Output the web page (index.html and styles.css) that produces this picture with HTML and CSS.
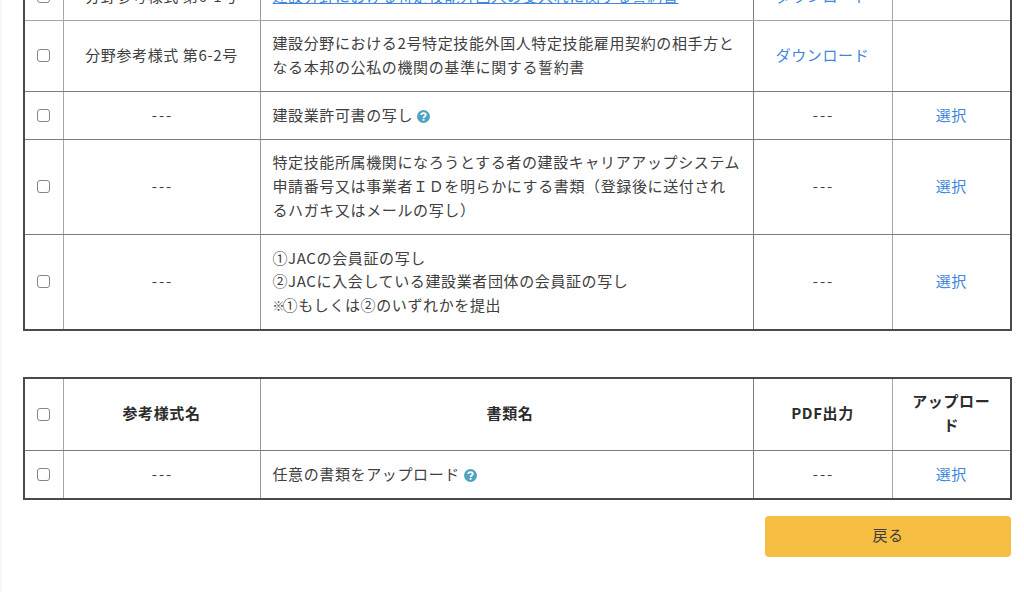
FILE: index.html
```html
<!DOCTYPE html>
<html lang="ja">
<head>
<meta charset="utf-8">
<title>書類一覧</title>
<link rel="stylesheet" href="styles.css">
</head>
<body>
<main class="page">
<table class="docs first">
<colgroup><col class="c1"><col class="c2"><col class="c3"><col class="c4"><col class="c5"></colgroup>
<tbody>
<tr>
<td class="chk"><input type="checkbox"></td>
<td class="ctr">分野参考様式 第6-1号</td>
<td><a href="#" class="ul">建設分野における特定技能外国人の受入れに関する誓約書</a></td>
<td class="ctr"><a href="#">ダウンロード</a></td>
<td class="ctr"></td>
</tr>
<tr>
<td class="chk"><input type="checkbox"></td>
<td class="ctr">分野参考様式 第6-2号</td>
<td>建設分野における2号特定技能外国人特定技能雇用契約の相手方と<br>なる本邦の公私の機関の基準に関する誓約書</td>
<td class="ctr"><a href="#">ダウンロード</a></td>
<td class="ctr"></td>
</tr>
<tr>
<td class="chk"><input type="checkbox"></td>
<td class="ctr dash">---</td>
<td>建設業許可書の写し <svg class="help" viewBox="0 0 14 14"><circle cx="7" cy="7" r="7" fill="#4fa3c0"/><path d="M4.6 5.4c0-1.3 1.1-2.1 2.4-2.1s2.4.8 2.4 2c0 1.7-2.3 1.6-2.3 3.2" fill="none" stroke="#fff" stroke-width="1.9"/><rect x="6.1" y="9.6" width="2" height="2" fill="#fff"/></svg></td>
<td class="ctr dash">---</td>
<td class="ctr"><a href="#">選択</a></td>
</tr>
<tr>
<td class="chk"><input type="checkbox"></td>
<td class="ctr dash">---</td>
<td>特定技能所属機関になろうとする者の建設キャリアアップシステム<br>申請番号又は事業者ＩＤを明らかにする書類（登録後に送付され<br>るハガキ又はメールの写し）</td>
<td class="ctr dash">---</td>
<td class="ctr"><a href="#">選択</a></td>
</tr>
<tr>
<td class="chk"><input type="checkbox"></td>
<td class="ctr dash">---</td>
<td>①JACの会員証の写し<br>②JACに入会している建設業者団体の会員証の写し<br><span class="mark">※</span>①もしくは②のいずれかを提出</td>
<td class="ctr dash">---</td>
<td class="ctr"><a href="#">選択</a></td>
</tr>
</tbody>
</table>
<table class="docs second">
<colgroup><col class="c1"><col class="c2"><col class="c3"><col class="c4"><col class="c5"></colgroup>
<thead>
<tr>
<th class="chk"><input type="checkbox"></th>
<th>参考様式名</th>
<th>書類名</th>
<th>PDF出力</th>
<th>アップロード</th>
</tr>
</thead>
<tbody>
<tr>
<td class="chk"><input type="checkbox"></td>
<td class="ctr dash">---</td>
<td>任意の書類をアップロード <svg class="help" viewBox="0 0 14 14"><circle cx="7" cy="7" r="7" fill="#4fa3c0"/><path d="M4.6 5.4c0-1.3 1.1-2.1 2.4-2.1s2.4.8 2.4 2c0 1.7-2.3 1.6-2.3 3.2" fill="none" stroke="#fff" stroke-width="1.9"/><rect x="6.1" y="9.6" width="2" height="2" fill="#fff"/></svg></td>
<td class="ctr dash">---</td>
<td class="ctr"><a href="#">選択</a></td>
</tr>
</tbody>
</table>
<div class="actions"><button type="button" class="back">戻る</button></div>
</main>
</body>
</html>
```
FILE: styles.css
```css
html, body {
  margin: 0;
  height: 592px;
  overflow: hidden;
  background: #fff;
}
body {
  border-left: 2px solid #f6f6f6;
  font-family: "Noto Sans CJK JP", "Liberation Sans", sans-serif;
  font-size: 15px;
  letter-spacing: 0.62px;
  line-height: 23.7px;
  color: #404040;
}
.page {
  margin-top: -29px;
  padding: 0 13px 0 21px;
}
.docs {
  border-collapse: collapse;
  table-layout: fixed;
  width: 987px;
  border: 2px solid #4a4a4a;
}
.second { margin-top: 46px; }
.c1 { width: 39px; }
.c2 { width: 197px; }
.c3 { width: 493px; }
.c4 { width: 139px; }
.c5 { width: 119px; }
td, th {
  border: 1px solid #7c7c7c;
  padding: 10.7px 12px 12.3px;
  text-align: left;
  vertical-align: middle;
}
td:nth-child(1), th:nth-child(1),
td:nth-child(4), th:nth-child(4) { border-right-color: #a6a6a6; }
td:nth-child(2), th:nth-child(2) { border-right-color: #999; }
.first tr:first-child td { border-bottom-color: #a6a6a6; }
td:nth-child(3), th:nth-child(3) { padding-right: 8px; }
th {
  padding: 10.5px 15px 13px;
  text-align: center;
  font-weight: 700;
  color: #2c2c2c;
}
.ctr { text-align: center; }
.dash { letter-spacing: 2px; text-indent: 2px; }
.mark { font-size: 12px; line-height: 1; letter-spacing: -2px; }
td.chk, th.chk { padding: 0; }
input[type="checkbox"] {
  appearance: none;
  box-sizing: border-box;
  display: block;
  width: 13px;
  height: 13px;
  margin: 0 auto;
  border: 1px solid #858585;
  border-radius: 3px;
  background: #fff;
}
a { color: #4087dc; text-decoration: none; }
a.ul { text-decoration: underline; }
.help {
  width: 13px;
  height: 13px;
  vertical-align: -2px;
}
.actions {
  display: flex;
  justify-content: flex-end;
  margin-top: 16px;
}
.back {
  width: 246px;
  height: 41px;
  padding: 0 0 2px;
  border: 0;
  border-radius: 4px;
  background: #f6be43;
  color: #404040;
  font: inherit;
  letter-spacing: inherit;
}
```
